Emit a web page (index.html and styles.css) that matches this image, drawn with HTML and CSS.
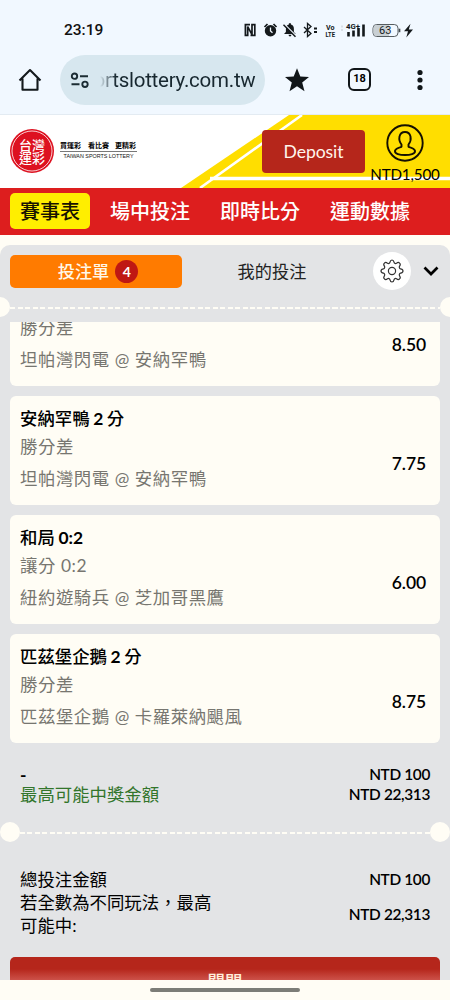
FILE: index.html
```html
<!DOCTYPE html>
<html lang="zh-Hant">
<head>
<meta charset="utf-8">
<meta name="viewport" content="width=device-width, initial-scale=1">
<title>台灣運彩</title>
<link rel="stylesheet" href="styles.css">
</head>
<body>
<div class="phone">
  <div class="chrome">
    <div class="status">
      <span class="clock">23:19</span>
      <svg class="status-icons" viewBox="0 0 172 20" width="172" height="20">
        <path d="M7 4.600H2.400v10.800h2.300V6.600l4.300 8V7.200M7.500 15.400h4.300V4.600H9v4" stroke="#14191c" stroke-width="1.700" fill="none"/>
        <circle cx="27.500" cy="10.700" r="5.700" fill="#14191c"/>
        <path d="M21.500 7l3-3M33.500 7l-3-3" stroke="#14191c" stroke-width="1.700"/>
        <path d="M27.500 7.500v3.500l2 1.800" stroke="#f1f8ff" stroke-width="1.300" fill="none"/>
        <path d="M41 14l1.900-2V9q0-3.800 3-4.500V3.300h2v1.200q3 .7 3 4.500v3l1.900 2zM45.500 14.800h3q-.2 1.700-1.500 1.700t-1.500-1.700z" fill="#14191c"/>
        <path d="M41.500 4.200l12 12" stroke="#f1f8ff" stroke-width="1.400"/>
        <path d="M40.500 4.700l12 12" stroke="#14191c" stroke-width="1.500"/>
        <path d="M61 7l7 6.500-3.500 3V3.500l3.500 3L61 13" stroke="#14191c" stroke-width="1.300" fill="none"/>
        <path d="M71 8.500h3M71 12h3" stroke="#14191c" stroke-width="1.800"/>
        <text x="83" y="9.500" class="volte" textLength="8.500" lengthAdjust="spacingAndGlyphs">Vo</text>
        <text x="82.500" y="16.600" class="volte" textLength="9.500" lengthAdjust="spacingAndGlyphs">LTE</text>
        <text x="103" y="9" class="four-g" textLength="14" lengthAdjust="spacingAndGlyphs">4G+</text>
        <path d="M99 5.500v2M99 9v2" stroke="#c1c8cc" stroke-width="1"/>
        <path d="M105.500 12v4.500M110.500 10.500v6M115.500 8v8.500M120.500 4.500v12" stroke="#14191c" stroke-width="2.600"/>
        <rect x="130" y="4.500" width="25" height="12" rx="3.700" fill="#f1f8ff" stroke="#555c60"/>
        <path d="M133.500 5H146v11h-12.500q-3 0-3-3V8q0-3 3-3z" fill="#c9d0d4"/>
        <path d="M156.500 8.700v3.500" stroke="#454b4f" stroke-width="1.700"/>
        <text x="142.300" y="14.300" class="battery">63</text>
        <path d="M167.500 3.800l-6.500 7.500h4l-1.700 6.200 6.700-8h-4.200z" fill="#14191c"/>
      </svg>
    </div>
    <div class="toolbar">
      <svg class="home" viewBox="0 0 24 24" width="24" height="24"><path d="M4.500 10.500V21.700h15V10.500M1.500 12.500 12 2 22.500 12.500" fill="none" stroke="#14191c" stroke-width="2.100" stroke-linejoin="round"/></svg>
      <div class="address">
        <svg viewBox="0 0 20 16" width="20" height="16" fill="none" stroke="#1b2c33" stroke-width="1.900"><circle cx="4.500" cy="4.200" r="2.700"/><path d="M10 4.200h8M1.500 12.300h8"/><circle cx="15" cy="12.300" r="2.700"/></svg>
        <span class="url">ortslottery.com.tw</span>
      </div>
      <svg class="star" viewBox="0 0 24 24" width="24" height="24"><path d="M12 .2l3.300 8.300 8.700.5-6.800 5.500 2.300 8.700L12 18.300l-7.500 4.900 2.300-8.700L0 9l8.700-.5z" fill="#111619"/></svg>
      <span class="tabs-count">18</span>
      <svg class="menu" viewBox="0 0 6 22" width="6" height="22" fill="#111619"><circle cx="3" cy="3.500" r="2.600"/><circle cx="3" cy="11" r="2.600"/><circle cx="3" cy="18.500" r="2.600"/></svg>
    </div>
  </div>

  <header class="site-header">
    <svg class="stripes" viewBox="0 0 450 73" width="450" height="73">
      <path d="M181 73 289 0H450V73z" fill="#ffde00"/>
      <path d="M200 73 302 0" stroke="#fff" stroke-width="2.600"/>
      <path d="M210 63.500H450" stroke="#fff" stroke-width="3.600"/>
    </svg>
    <div class="brand">
      <svg viewBox="0 0 44 44" width="44" height="44">
        <circle cx="22" cy="22" r="22" fill="#dd1120"/>
        <circle cx="22" cy="22" r="20" fill="none" stroke="#fff" stroke-width=".8"/>
        <text x="22" y="20.500" class="seal">台灣</text>
        <text x="22" y="33.500" class="seal">運彩</text>
      </svg>
      <svg viewBox="0 0 78 26" width="78" height="26">
        <text x="0" y="11" class="slogan">買運彩</text>
        <text x="28" y="11" class="slogan">看比賽</text>
        <text x="55" y="11" class="slogan">更精彩</text>
        <path d="M0 14.500h77" stroke="#555" stroke-width=".8"/>
        <text x="3.500" y="21.300" class="latin" textLength="70" lengthAdjust="spacingAndGlyphs">TAIWAN SPORTS LOTTERY</text>
      </svg>
    </div>
    <button class="deposit">Deposit</button>
    <div class="account">
      <svg viewBox="0 0 38 38" width="38" height="38" fill="none" stroke="#151000" stroke-width="1.900"><circle cx="19" cy="19" r="17.700"/><path d="M15.500 20.500C13.500 18 13 15 13.500 12.500 14.200 9.500 16.300 8 19 8s4.800 1.500 5.500 4.500c.5 2.500 0 5.500-2 8v2.300c3.500 1 6 2 6.500 4C29.500 30 24 31 19 31S8.500 30 9 26.800c.5-2 3-3 6.500-4z" stroke-linejoin="round"/></svg>
      <span>NTD1,500</span>
    </div>
  </header>

  <nav class="main-nav">
    <a class="nav-item active">賽事表</a>
    <a class="nav-item">場中投注</a>
    <a class="nav-item">即時比分</a>
    <a class="nav-item">運動數據</a>
  </nav>

  <main class="slip">
    <div class="slip-tabs">
      <div class="tab selected">投注單<span class="badge">4</span></div>
      <div class="tab">我的投注</div>
      <span class="gear"><svg viewBox="0 0 24 24" width="24" height="24" fill="none" stroke="#333" stroke-width="1.200" stroke-linejoin="round"><circle cx="12" cy="12" r="3.600"/><path d="M10 3.200C10.300 1.600 10.800 1 12 1s1.700.6 2 2.200c.2 1.200 1.500 1.700 2.500 1 1.300-1 2.300-1 3.100-.1.900.8.900 1.800 0 3.100-.7 1-.2 2.300 1 2.600 1.700.3 2.400.9 2.400 2.200s-.7 1.900-2.400 2.200c-1.200.3-1.700 1.600-1 2.600.9 1.300.9 2.300 0 3.100-.8.900-1.800.9-3.100-.1-1-.7-2.300-.2-2.500 1-.3 1.600-.8 2.200-2 2.200s-1.700-.6-2-2.200c-.2-1.200-1.500-1.700-2.500-1-1.300 1-2.300 1-3.100.1-.9-.8-.9-1.800 0-3.100.7-1 .2-2.300-1-2.600C1.700 13.900 1 13.300 1 12s.7-1.900 2.400-2.200c1.200-.3 1.700-1.600 1-2.600-.9-1.300-.9-2.300 0-3.100.8-.9 1.800-.9 3.100.1 1 .7 2.300.2 2.500-1z"/></svg></span>
      <svg class="chevron" viewBox="0 0 16 10" width="16" height="10"><path d="M1.500 1.500 8 8l6.500-6.500" fill="none" stroke="#000" stroke-width="2.700"/></svg>
    </div>
    <div class="tear outer"><i></i></div>
    <div class="bets">
      <article class="bet scrolled"><p>勝分差</p><p class="match">坦帕灣閃電 @ 安納罕鴨</p><b class="odds">8.50</b></article>
      <article class="bet"><h3>安納罕鴨 <b>2</b> 分</h3><p>勝分差</p><p class="match">坦帕灣閃電 @ 安納罕鴨</p><b class="odds">7.75</b></article>
      <article class="bet"><h3>和局 <b>0:2</b></h3><p>讓分 0:2</p><p class="match">紐約遊騎兵 @ 芝加哥黑鷹</p><b class="odds">6.00</b></article>
      <article class="bet"><h3>匹茲堡企鵝 <b>2</b> 分</h3><p>勝分差</p><p class="match">匹茲堡企鵝 @ 卡羅萊納颶風</p><b class="odds">8.75</b></article>
    </div>
    <div class="summary">
      <div class="row"><b>-</b><span class="amount">NTD 100</span></div>
      <div class="row"><span class="win">最高可能中獎金額</span><span class="amount">NTD 22,313</span></div>
    </div>
    <div class="tear"><i></i></div>
    <div class="totals">
      <div class="total"><span>總投注金額</span><span class="amount">NTD 100</span></div>
      <div class="total"><span>若全數為不同玩法，最高<br>可能中:</span><span class="amount">NTD 22,313</span></div>
    </div>
    <button class="close">關閉</button>
  </main>
  <footer class="gesture"><i></i></footer>
</div>
</body>
</html>
```

FILE: styles.css
```css
* { box-sizing: border-box; }
body { margin: 0; background: #fffdf5; }
.phone {
  width: 450px; height: 1000px; overflow: hidden;
  display: flex; flex-direction: column;
  font-family: Lato, "Noto Sans CJK TC", sans-serif;
  color: #000;
}
button { border: 0; padding: 0; font-family: inherit; }

.chrome { height: 115px; flex: none; background: #f1f8ff; border-bottom: 1px solid #e3ebf2; }
.status { height: 54px; padding: 20px 35px 0 64px; display: flex; justify-content: space-between; }
.clock { font: 500 15.5px/21px Roboto, sans-serif; color: #111; }
.status-icons { display: block; }
.volte, .four-g, .battery { font-family: Roboto, sans-serif; fill: #14191c; }
.volte { font-size: 7.5px; font-weight: 700; }
.four-g { font-size: 8px; font-weight: 700; }
.battery { font-size: 11px; text-anchor: middle; }
.toolbar { height: 51px; padding: 0 27px 0 18px; display: flex; align-items: center; }
.home { flex: none; }
.address {
  width: 205px; height: 50px; margin-left: 18px; padding-left: 10px;
  border-radius: 25px; background: #d7e7ef;
  display: flex; align-items: center; gap: 10px; overflow: hidden;
}
.url {
  width: 155.5px; display: flex; justify-content: flex-end; overflow: hidden;
  font: 20.5px/30px Roboto, sans-serif; letter-spacing: -0.25px; color: #17272f; white-space: nowrap;
  -webkit-mask-image: linear-gradient(90deg, transparent, #000 16px);
  mask-image: linear-gradient(90deg, transparent, #000 16px);
}
.star { margin-left: 20px; }
.tabs-count {
  width: 23px; height: 23px; margin-left: 39px; border: 2.5px solid #111619; border-radius: 6px;
  font: 700 11px/18px Roboto, sans-serif; text-align: center;
}
.menu { margin-left: auto; }

.site-header {
  position: relative; height: 73px; flex: none; background: #fff;
  display: flex; align-items: flex-start; padding-left: 10px;
}
.stripes { position: absolute; left: 0; top: 0; }
.brand { width: 252px; padding-top: 14px; display: flex; gap: 6px; align-items: flex-start; z-index: 1; }
.brand svg + svg { margin-top: 8px; }
.seal { font: 500 13px "Noto Sans CJK TC", sans-serif; fill: #fff; text-anchor: middle; }
.slogan { font: 700 7px "Noto Sans CJK TC", sans-serif; }
.latin { font: 5px "Liberation Sans", sans-serif; fill: #111; }
.deposit {
  width: 103px; height: 43px; margin-top: 15px; z-index: 1;
  border-radius: 4px; background: #b5261b; color: #fff5ec; font-size: 17.6px; letter-spacing: -0.1px; line-height: 43px;
}
.account {
  z-index: 1; width: 80px; margin-top: 9px;
  display: flex; flex-direction: column; align-items: center; white-space: nowrap;
}
.account span { font-size: 15.2px; letter-spacing: -0.15px; line-height: 20px; margin-top: 2px; }

.main-nav {
  height: 47px; flex: none; padding: 5px 10px 0; background: #dd1e1e;
  display: flex; gap: 10px;
}
.nav-item {
  height: 36px; width: 100px; text-align: center; border-radius: 5px;
  color: #fff; font-size: 20px; line-height: 36px; font-weight: 500; white-space: nowrap;
}
.nav-item.active { width: 80px; background: #ffee00; color: #171300; }

.slip {
  height: 735px; margin-top: 10px; flex: none; overflow: hidden;
  background: #e3e4e6; border-radius: 10px 10px 0 0;
  display: flex; flex-direction: column;
}
.slip-tabs { height: 52px; flex: none; padding-left: 10px; display: flex; align-items: center; }
.tab { width: 172px; height: 33px; margin-right: 2px; text-align: center; font-size: 17.2px; line-height: 33px; }
.tab + .tab { width: 176px; margin-right: 13px; color: #222; }
.selected {
  background: #ff7b00; color: #fff8e8; border-radius: 5px; font-weight: 500;
  display: flex; align-items: center; justify-content: center; gap: 6px; padding-left: 4px;
}
.badge { width: 23px; height: 23px; border-radius: 50%; background: #bf1813; font: 700 14px/23px Lato, sans-serif; color: #fff; }
.gear { width: 38px; height: 38px; flex: none; border-radius: 50%; background: #fff; display: grid; place-items: center; }
.chevron { margin-left: 12px; flex: none; }

.tear { height: 20px; flex: none; display: flex; align-items: center; justify-content: space-between; }
.tear::before, .tear::after { content: ""; width: 20px; height: 20px; flex: none; border-radius: 50%; background: #fffdf5; }
.tear i {
  flex: 1; height: 2.5px; margin-top: 1.5px;
  background: repeating-linear-gradient(90deg, #fffdf5 0 5px, transparent 5px 7.5px);
}
.outer { margin: 0 -10px; }

.bets { height: 421px; margin: 5px 10px 0; flex: none; overflow: hidden; display: flex; flex-direction: column; justify-content: flex-end; gap: 10px; }
.bet {
  height: 109px; flex: none; padding: 9px 14px 0 10px; border-radius: 6px; background: #fffdf5;
  display: grid; grid-template-columns: 1fr auto; grid-template-rows: 28px 28px 36px; align-items: center;
}
.bet.scrolled { height: 72px; padding-top: 0; grid-template-rows: 28px 36px; }
.bet h3, .bet p { margin: 0; grid-column: 1; font-size: 17.4px; line-height: 28px; white-space: nowrap; }
.bet h3 { font-weight: 500; word-spacing: -0.8px; }
.bet h3 b { font-weight: 700; }
.bet p { font-weight: 400; color: #777670; letter-spacing: 0.55px; }
.odds { grid-column: 2; grid-row: 2 / 4; font-size: 17.5px; font-weight: 600; letter-spacing: -0.1px; line-height: 28px; padding-bottom: 3px; }
.scrolled .odds { grid-row: 1 / 3; }

.summary { height: 79px; flex: none; padding: 21.5px 20px 0 20px; font-size: 17.4px; line-height: 20px; }
.row { height: 20px; display: flex; justify-content: space-between; align-items: center; }
.win { color: #32752b; }
.amount { font-size: 15.4px; font-weight: 600; letter-spacing: -0.35px; white-space: nowrap; padding-bottom: 1px; }
.totals { height: 115px; flex: none; padding: 26px 20px 0 20px; font-size: 17.4px; line-height: 23px; }
.total { display: flex; justify-content: space-between; align-items: center; height: 23px; }
.total + .total { height: 46px; }
.total .amount { padding-bottom: 0; }
.close {
  height: 50px; margin: 0 10px; flex: none; border-radius: 5px; color: #ffeedc;
  background: linear-gradient(#b5261b 24%, #ce554d 48%);
  font-size: 17.4px; font-weight: 500; line-height: 50px;
}
.gesture { height: 20px; flex: none; background: #fffdf5; display: flex; justify-content: center; align-items: center; }
.gesture i { width: 150px; height: 4px; border-radius: 2px; background: #7c7d77; }
```
